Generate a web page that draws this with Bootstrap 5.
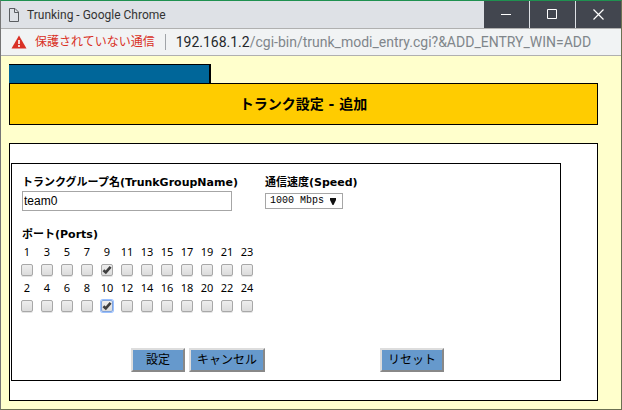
<!DOCTYPE html>
<html lang="ja">
<head>
<meta charset="utf-8">
<meta name="viewport" content="width=device-width, initial-scale=1">
<title>Trunking</title>
<link href="https://cdn.jsdelivr.net/npm/bootstrap@5.3.0/dist/css/bootstrap.min.css" rel="stylesheet">
<style>
body { font-family: "Noto Sans", "Noto Sans CJK JP", sans-serif; font-size: 11px; line-height: 16px; color: #000; }
.win { background: #ffffcc; border-top: 1px solid #1f9150; border-right: 1px solid #6b7052; border-bottom: 1px solid #6b7052; border-left: 1px solid #757575; }
.titlebar { background: #dee1e6; border-bottom: 1px solid #b0b0b0; height: 28px; font-family: Roboto, sans-serif; font-size: 12px; color: #333; }
.win-btns { gap: 1px; }
.win-btn { width: 45px; height: 27px; background: #42464f; border: 0; color: #fff; }
.address { background: #f1f3f4; border-bottom: 1px solid #b0b0b0; height: 27px; font-family: Roboto, "Noto Sans CJK JP", sans-serif; font-size: 14px; color: #80868b; }
.warn { margin: 0 6px 0 8px; }
.insecure { color: #d93025; font-size: 12px; }
.divider { width: 1px; height: 16px; margin: 0 10px; background: #a0a4a8; }
.host { color: #24272b; }
.page-area { padding: 8px 23px 8px 8px; }
.tab-strip { width: 202px; height: 19px; background: #006699; border-top: 1px solid #000; border-right: 2px solid #000; }
.heading { background: #ffcc00; border: 1px solid #000; height: 42px; font-family: "DejaVu Sans", "Noto Sans CJK JP", sans-serif; font-size: 14px; line-height: 20px; margin-bottom: 18px; }
.outer { background: #fff; border: 1px solid #000; padding: 19px 36px 19px 1px; }
.panel { border: 1px solid #000; padding: 11px 10px 8px; }
.cap { font-family: "DejaVu Sans", "Noto Sans CJK JP", sans-serif; font-weight: 700; display: block; white-space: nowrap; }
.fields { gap: 33px; margin-bottom: 16px; }
.name-field { width: 210px; }
.name-box { width: 100%; height: 20px; padding: 0 1px; border: 1px solid #a6a6a6; font: 12px "Liberation Sans", sans-serif; color: #000; display: block; }
.speed-box { width: 78px; height: 16px; margin-top: 2px; padding: 0 4px; border: 1px solid #a6a6a6; border-radius: 0; font: 10px/14px "Liberation Mono", monospace; color: #000; appearance: none; display: block;
  background: #fff url("data:image/svg+xml,%3Csvg xmlns='http://www.w3.org/2000/svg' width='6' height='7'%3E%3Cpath d='M0 0h6v2L3.5 7h-1L0 2z' fill='%23111'/%3E%3C/svg%3E") no-repeat right 6px center; }
.ports { margin-left: -5px; margin-bottom: 33px; border-collapse: collapse; }
.ports td { width: 20px; height: 18px; padding: 0; text-align: center; vertical-align: middle; line-height: 16px; }
.ports input { appearance: none; display: block; width: 12px; height: 12px; margin: 0 auto; border: 1px solid #a8a8a8; border-radius: 2px; background: linear-gradient(#eeeeee, #dcdcdc); box-shadow: 0 1px 0 #e4e4e4; }
.ports input:checked { background: url("data:image/svg+xml,%3Csvg xmlns='http://www.w3.org/2000/svg' width='10' height='10'%3E%3Cpath d='M1.4 5.2L3.8 7.4L8.6 1.8' fill='none' stroke='%23404040' stroke-width='2.6'/%3E%3C/svg%3E") center no-repeat, linear-gradient(#eeeeee, #dcdcdc); }
.ports input.current { border-color: #7fa3dc; box-shadow: 0 0 0 1px #9ac0ff; }
.actions { padding-left: 109px; gap: 4px; }
.act { height: 24px; padding: 0 6px; background: #6699cc; border: 2px solid; border-color: #ddd #888 #888 #ddd; font-size: 12px; line-height: 18px; color: #000; }
.act-ok { width: 54px; }
.act-cancel { width: 76px; margin-right: 111px; }
.act-reset { width: 64px; }
</style>
<script src="https://cdn.jsdelivr.net/npm/bootstrap@5.3.0/dist/js/bootstrap.bundle.min.js"></script>
</head>
<body>
<div class="win d-flex flex-column min-vh-100">
  <header class="titlebar d-flex align-items-center">
    <svg class="ms-2 flex-shrink-0" width="10" height="14" viewBox="0 0 10 14" fill="none" stroke="#5a5d61" aria-hidden="true"><path d="M.5.5h5.5L9.5 4v9.5h-9zM5.5.5v4h4"/></svg>
    <span class="ps-2 flex-grow-1">Trunking - Google Chrome</span>
    <div class="win-btns d-flex">
      <button class="win-btn d-flex align-items-center justify-content-center p-0" aria-label="最小化"><svg width="11" height="11" stroke="#fff"><path d="M0 5.5h10"/></svg></button>
      <button class="win-btn d-flex align-items-center justify-content-center p-0" aria-label="最大化"><svg width="11" height="11" fill="none" stroke="#fff"><path d="M.5.5h9v9h-9z"/></svg></button>
      <button class="win-btn d-flex align-items-center justify-content-center p-0" aria-label="閉じる"><svg width="11" height="11" stroke="#fff" stroke-width="1.2"><path d="M.5.5l10 10M10.5.5l-10 10"/></svg></button>
    </div>
  </header>
  <div class="address d-flex align-items-center">
    <svg class="warn flex-shrink-0" width="20" height="14" viewBox="0 0 20 14" aria-hidden="true"><path d="M10 .5L17.5 13.5H2.5z" fill="#d93025"/><path d="M10 5v4M10 10v2" stroke="#fff" stroke-width="1.6"/></svg>
    <span class="insecure text-nowrap">保護されていない通信</span>
    <span class="divider"></span>
    <span class="text-nowrap"><span class="host">192.168.1.2</span>/cgi-bin/trunk_modi_entry.cgi?&amp;ADD_ENTRY_WIN=ADD</span>
  </div>
  <main class="page-area">
    <div class="tab-strip"></div>
    <h1 class="heading d-flex align-items-center justify-content-center fw-bold">トランク設定 - 追加</h1>
    <div class="outer">
      <form class="panel">
        <div class="fields d-flex">
          <div class="name-field">
            <label class="cap" for="tname">トランクグループ名(TrunkGroupName)</label>
            <input class="name-box" id="tname" type="text" value="team0">
          </div>
          <div>
            <label class="cap" for="speed">通信速度(Speed)</label>
            <select class="speed-box" id="speed"><option>1000 Mbps</option></select>
          </div>
        </div>
        <span class="cap">ポート(Ports)</span>
        <table class="ports">
          <tr>
            <td><label for="p1">1</label></td><td><label for="p3">3</label></td><td><label for="p5">5</label></td><td><label for="p7">7</label></td><td><label for="p9">9</label></td><td><label for="p11">11</label></td><td><label for="p13">13</label></td><td><label for="p15">15</label></td><td><label for="p17">17</label></td><td><label for="p19">19</label></td><td><label for="p21">21</label></td><td><label for="p23">23</label></td>
          </tr>
          <tr>
            <td><input type="checkbox" id="p1"></td><td><input type="checkbox" id="p3"></td><td><input type="checkbox" id="p5"></td><td><input type="checkbox" id="p7"></td><td><input type="checkbox" id="p9" checked></td><td><input type="checkbox" id="p11"></td><td><input type="checkbox" id="p13"></td><td><input type="checkbox" id="p15"></td><td><input type="checkbox" id="p17"></td><td><input type="checkbox" id="p19"></td><td><input type="checkbox" id="p21"></td><td><input type="checkbox" id="p23"></td>
          </tr>
          <tr>
            <td><label for="p2">2</label></td><td><label for="p4">4</label></td><td><label for="p6">6</label></td><td><label for="p8">8</label></td><td><label for="p10">10</label></td><td><label for="p12">12</label></td><td><label for="p14">14</label></td><td><label for="p16">16</label></td><td><label for="p18">18</label></td><td><label for="p20">20</label></td><td><label for="p22">22</label></td><td><label for="p24">24</label></td>
          </tr>
          <tr>
            <td><input type="checkbox" id="p2"></td><td><input type="checkbox" id="p4"></td><td><input type="checkbox" id="p6"></td><td><input type="checkbox" id="p8"></td><td><input type="checkbox" id="p10" class="current" checked></td><td><input type="checkbox" id="p12"></td><td><input type="checkbox" id="p14"></td><td><input type="checkbox" id="p16"></td><td><input type="checkbox" id="p18"></td><td><input type="checkbox" id="p20"></td><td><input type="checkbox" id="p22"></td><td><input type="checkbox" id="p24"></td>
          </tr>
        </table>
        <div class="actions d-flex">
          <button type="button" class="act act-ok">設定</button>
          <button type="button" class="act act-cancel">キャンセル</button>
          <button type="reset" class="act act-reset">リセット</button>
        </div>
      </form>
    </div>
  </main>
</div>
</body>
</html>
